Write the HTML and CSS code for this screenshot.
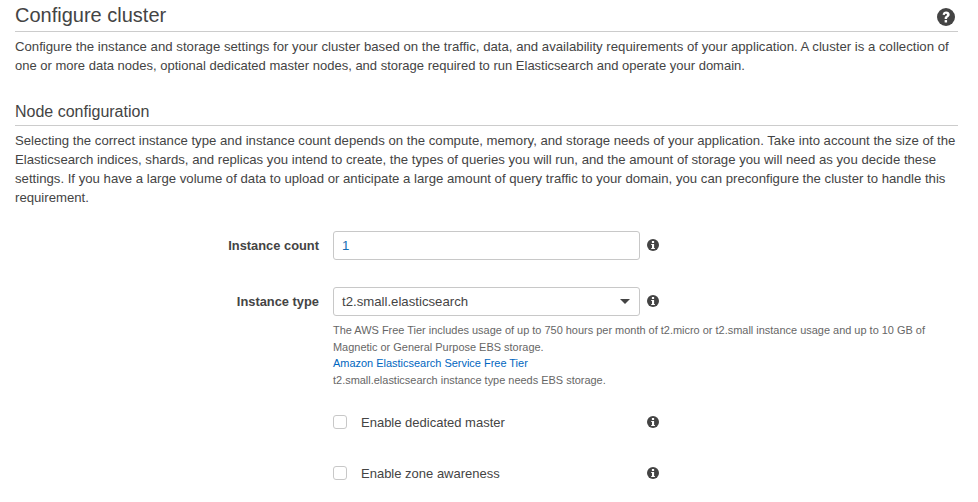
FILE: index.html
```html
<!DOCTYPE html>
<html lang="en">

<head>
    <meta charset="UTF-8">
    <meta name="viewport" content="width=device-width, initial-scale=1.0">
    <title>Configure cluster</title>
    <link rel="stylesheet" href="styles.css">
</head>

<body>
    <div class="page">
        <div class="heading-main">
            <h1>Configure cluster</h1>
            <svg class="help-icon" viewBox="0 0 20 20">
                <circle cx="10" cy="10" r="10" fill="#444"></circle>
                <path d="M6.2 7.6C6.4 5.2 8 3.9 10.2 3.9c2.2 0 3.9 1.3 3.9 3.3 0 1.5-.9 2.3-1.9 3-.7.5-1 .8-1 1.5v.5H8.5v-.7c0-1.3.5-1.9 1.4-2.6.8-.6 1.2-.9 1.2-1.5 0-.6-.4-1-1.1-1-.8 0-1.2.5-1.3 1.3z" fill="#fff"></path>
                <rect x="8.5" y="13.4" width="2.7" height="2.7" fill="#fff"></rect>
            </svg>
        </div>
        <p class="intro">Configure the instance and storage settings for your cluster based on the traffic, data, and availability requirements of your application. A cluster is a collection of <span class="intro-end">one or more data nodes, optional dedicated master nodes, and storage required to run Elasticsearch and operate your domain.</span></p>

        <h2>Node configuration</h2>
        <p class="desc">Selecting the correct instance type and instance count depends on the compute, memory, and storage needs of your application. Take into account the size of the Elasticsearch indices, shards, and replicas you intend to create, the types of queries you will run, and the amount of storage you will need as you decide these settings. If you have a large volume of data to upload or anticipate a large amount of query traffic to your domain, you can preconfigure the cluster to handle this requirement.</p>

        <div class="row row-count">
            <label class="row-label">Instance count</label>
            <div class="box"><span class="count-value">1</span></div>
            <svg class="info-icon" viewBox="0 0 12 12">
                <circle cx="6" cy="6" r="6" fill="#444"></circle>
                <rect x="4.9" y="2" width="2.2" height="2" fill="#fff"></rect>
                <path d="M4.2 5h2.9v3.9h.8V10H4.2V8.9h.8V6.1h-.8z" fill="#fff"></path>
            </svg>
        </div>

        <div class="row row-type">
            <label class="row-label">Instance type</label>
            <div class="box box-select">
                <span>t2.small.elasticsearch</span>
                <i class="caret"></i>
            </div>
            <svg class="info-icon" viewBox="0 0 12 12">
                <circle cx="6" cy="6" r="6" fill="#444"></circle>
                <rect x="4.9" y="2" width="2.2" height="2" fill="#fff"></rect>
                <path d="M4.2 5h2.9v3.9h.8V10H4.2V8.9h.8V6.1h-.8z" fill="#fff"></path>
            </svg>
        </div>
        <div class="hint">
            The AWS Free Tier includes usage of up to 750 hours per month of t2.micro or t2.small instance usage and up to 10 GB of Magnetic or General Purpose EBS storage.<br>
            <a href="#">Amazon Elasticsearch Service Free Tier</a><br>
            t2.small.elasticsearch instance type needs EBS storage.
        </div>

        <div class="check-row check-first">
            <span class="checkbox"></span>
            <span class="check-text">Enable dedicated master</span>
            <svg class="info-icon" viewBox="0 0 12 12">
                <circle cx="6" cy="6" r="6" fill="#444"></circle>
                <rect x="4.9" y="2" width="2.2" height="2" fill="#fff"></rect>
                <path d="M4.2 5h2.9v3.9h.8V10H4.2V8.9h.8V6.1h-.8z" fill="#fff"></path>
            </svg>
        </div>
        <div class="check-row check-second">
            <span class="checkbox"></span>
            <span class="check-text">Enable zone awareness</span>
            <svg class="info-icon" viewBox="0 0 12 12">
                <circle cx="6" cy="6" r="6" fill="#444"></circle>
                <rect x="4.9" y="2" width="2.2" height="2" fill="#fff"></rect>
                <path d="M4.2 5h2.9v3.9h.8V10H4.2V8.9h.8V6.1h-.8z" fill="#fff"></path>
            </svg>
        </div>
    </div>
</body>

</html>
```

FILE: styles.css
```css
html, body {
    margin: 0;
    background-color: #fff;
}

body {
    height: 502px;
    overflow: hidden;
    font-family: "Liberation Sans", Arial, sans-serif;
    font-size: 13px;
    color: #444;
}

.page {
    padding: 0 20px 0 15px;
}

.heading-main {
    display: flex;
    justify-content: space-between;
    align-items: center;
    height: 31px;
    border-bottom: 1px solid #ccc;
}

h1 {
    margin: 0 0 2px;
    font-size: 20px;
    font-weight: 400;
    line-height: 28px;
}

.help-icon {
    width: 18px;
    height: 18px;
    margin: 3px 3px 0 0;
}

.intro {
    margin: 5px 0 0;
    font-size: 13.2px;
    line-height: 19px;
}

.intro-end {
    font-size: 13px;
}

h2 {
    margin: 25px 0 0;
    font-size: 16px;
    font-weight: 400;
    line-height: 24px;
    height: 25px;
    border-bottom: 1px solid #ccc;
}

.desc {
    margin: 5px 0 0;
    font-size: 13.18px;
    line-height: 19px;
}

.row {
    display: flex;
    align-items: center;
}

.row-count {
    margin-top: 24px;
}

.row-type {
    margin-top: 27px;
}

.row-label {
    width: 304px;
    text-align: right;
    font-size: 12.87px;
    font-weight: 700;
}

.box {
    box-sizing: border-box;
    display: flex;
    align-items: center;
    justify-content: space-between;
    width: 307px;
    height: 29px;
    margin-left: 14px;
    padding: 0 9px 0 8px;
    font-size: 13.2px;
    background-color: #fff;
    border: 1px solid #c8c8c8;
    border-radius: 3px;
}

.count-value {
    color: #146eb4;
}

.caret {
    width: 0;
    height: 0;
    border-left: 5px solid transparent;
    border-right: 5px solid transparent;
    border-top: 5px solid #444;
}

.info-icon {
    width: 12px;
    height: 12px;
    flex: none;
}

.row .info-icon {
    margin: 0 0 1px 7px;
}

.hint {
    width: 600px;
    margin: 6px 0 0 318px;
    font-size: 10.96px;
    line-height: 16.5px;
    color: #666;
}

.hint a {
    color: #0066c0;
    text-decoration: none;
}

.check-row {
    display: flex;
    align-items: center;
    height: 20px;
    margin-left: 318px;
}

.check-first {
    margin-top: 24px;
}

.check-second {
    margin-top: 31px;
}

.checkbox {
    box-sizing: border-box;
    width: 14px;
    height: 14px;
    border: 1px solid #c8c8c8;
    border-radius: 3px;
}

.check-text {
    width: 286px;
    margin-left: 14px;
}
```
